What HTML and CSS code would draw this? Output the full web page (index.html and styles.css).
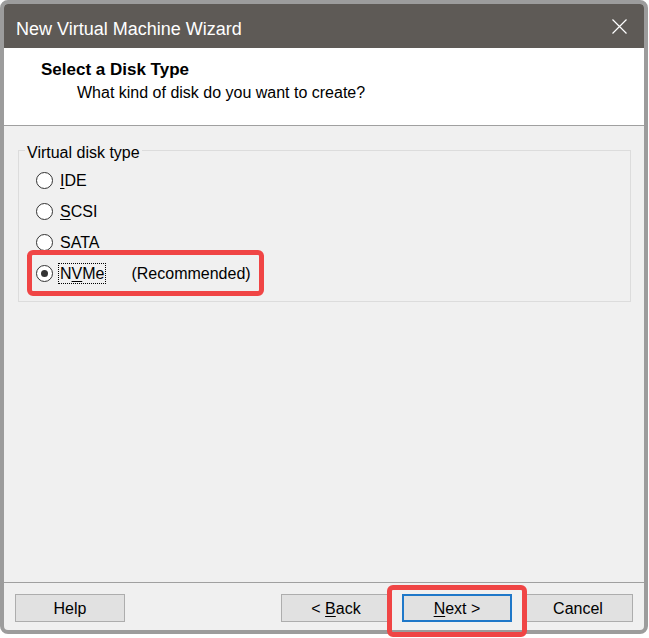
FILE: index.html
```html
<!DOCTYPE html>
<html>
<head>
<meta charset="utf-8">
<link rel="stylesheet" href="styles.css">
</head>
<body>
<div class="screen">
  <div class="window">
    <div class="titlebar">
      <span class="title">New Virtual Machine Wizard</span>
      <svg class="close" width="15" height="15" viewBox="0 0 15 15"><path d="M0.5 0.5 L14.5 14.5 M14.5 0.5 L0.5 14.5" stroke="#ffffff" stroke-width="1.2" fill="none"/></svg>
    </div>
    <div class="header">
      <div class="h-title">Select a Disk Type</div>
      <div class="h-sub">What kind of disk do you want to create?</div>
    </div>
    <div class="content">
      <fieldset class="group">
        <legend>Virtual disk type</legend>
        <div class="opt"><span class="radio"></span><span class="label"><u>I</u>DE</span></div>
        <div class="opt"><span class="radio"></span><span class="label"><u>S</u>CSI</span></div>
        <div class="opt"><span class="radio"></span><span class="label">S<u>A</u>TA</span></div>
        <div class="opt"><span class="radio checked"></span><span class="label focus">N<u>V</u>Me</span><span class="note">(Recommended)</span></div>
      </fieldset>
    </div>
    <div class="footer">
      <button class="btn">Help</button>
      <span class="spacer"></span>
      <button class="btn">&lt; <u>B</u>ack</button>
      <button class="btn default"><u>N</u>ext &gt;</button>
      <button class="btn">Cancel</button>
    </div>
  </div>
  <div class="mark mark-nvme"></div>
  <div class="mark mark-next"></div>
</div>
</body>
</html>
```
FILE: styles.css
```css
html, body {
  margin: 0;
  padding: 0;
  background: #ffffff;
}
body {
  font-family: "Liberation Sans", Arial, sans-serif;
  font-size: 16px;
  color: #000;
}
.screen {
  position: relative;
  width: 649px;
  height: 638px;
}
.window {
  box-sizing: border-box;
  width: 648px;
  height: 634px;
  border: 4px solid #9c9c9c;
  border-radius: 8px;
  overflow: hidden;
  background: #f0f0f0;
  display: flex;
  flex-direction: column;
}
.titlebar {
  height: 44px;
  flex: none;
  background: #5e5a56;
  color: #ffffff;
  display: flex;
  align-items: center;
  padding-left: 12px;
}
.title {
  font-size: 18px;
  flex: 1;
  padding-top: 7px;
}
.close {
  margin-right: 17px;
  display: block;
}
.header {
  flex: none;
  height: 65px;
  background: #ffffff;
  border-bottom: 1px solid #a0a0a0;
  padding: 12px 0 0 37px;
}
.h-title {
  font-weight: bold;
  font-size: 17px;
  line-height: 20px;
}
.h-sub {
  margin-top: 3px;
  padding-left: 36px;
  line-height: 20px;
}
.content {
  flex: 1;
  padding: 11px 13px 0 14px;
}
.group {
  margin: 0;
  border: 1px solid #dcdcdc;
  padding: 2px 6px 12px 6px;
}
.group legend {
  padding: 6px 2px 0 2px;
  line-height: 20px;
}
.opt {
  display: flex;
  align-items: center;
  height: 31px;
  padding-left: 11px;
}
.radio {
  box-sizing: border-box;
  width: 17px;
  height: 17px;
  border: 1px solid #333333;
  border-radius: 50%;
  background: #ffffff;
  display: flex;
  align-items: center;
  justify-content: center;
}
.radio.checked::after {
  content: "";
  width: 7px;
  height: 7px;
  border-radius: 50%;
  background: #333333;
}
.label {
  margin-left: 6px;
  padding: 0 1px;
  line-height: 19px;
}
.label u, .btn u {
  text-underline-offset: 2px;
}
.label.focus {
  outline: 1px dotted #000;
}
.note {
  margin-left: 26px;
}
.footer {
  flex: none;
  box-sizing: border-box;
  height: 48px;
  border-top: 1px solid #a0a0a0;
  display: flex;
  align-items: flex-start;
  padding: 11px 11px 0 11px;
}
.spacer {
  flex: 1;
}
.btn {
  box-sizing: border-box;
  width: 110px;
  height: 28px;
  background: #e1e1e1;
  border: 1px solid #adadad;
  font-family: "Liberation Sans", Arial, sans-serif;
  font-size: 16px;
  color: #000;
  padding: 1px 0 0 0;
  margin: 0 0 0 11px;
}
.btn:first-child {
  margin-left: 0;
}
.btn.default {
  border: 2px solid #1f78c9;
}
.mark {
  position: absolute;
  box-sizing: border-box;
  border: 5px solid #f04545;
  border-radius: 6px;
}
.mark-nvme {
  left: 27px;
  top: 250px;
  width: 237px;
  height: 46px;
}
.mark-next {
  left: 387px;
  top: 585px;
  width: 140px;
  height: 52px;
}
```
